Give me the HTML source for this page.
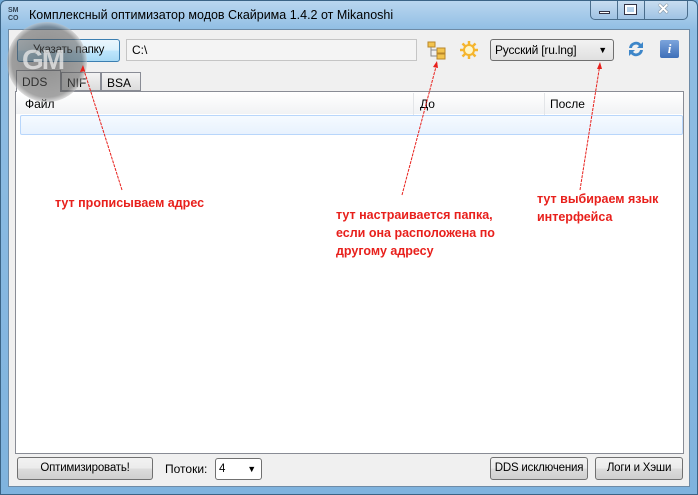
<!DOCTYPE html>
<html><head><meta charset="utf-8"><style>
*{margin:0;padding:0;box-sizing:border-box}
body{width:698px;height:495px;position:relative;overflow:hidden;font-family:"Liberation Sans",sans-serif;font-size:12px;background:#6fa8d6}
.win{position:absolute;left:0;top:0;width:698px;height:495px;background:linear-gradient(#b9d6ef,#8fbde3 30px,#7fb3de);border:1px solid #3b6486;border-radius:6px 6px 0 0}
.title{position:absolute;left:28px;top:7px;font-size:12.5px;color:#000}
.client{position:absolute;left:8px;top:29px;width:682px;height:458px;background:#f0f0f0;border:1px solid #6e8ba6}
.a{position:absolute}
.btn{position:absolute;border:1px solid #707070;border-radius:3px;background:linear-gradient(#f2f2f2,#ebebeb 50%,#dcdcdc 51%,#cfcfcf);text-align:center;font-size:11.5px;white-space:nowrap;letter-spacing:-0.2px}
.red{position:absolute;color:#e8201c;font-weight:bold;font-size:12.5px;line-height:18px}
</style></head><body>
<div class="win">
<div class="a" style="left:7px;top:6px;font-size:7px;font-weight:bold;color:#345;line-height:8px">SM<br>CO</div>
<div class="title">Комплексный оптимизатор модов Скайрима 1.4.2 от Mikanoshi</div>
<div class="a" style="left:589px;top:0;width:98px;height:19px;border:1px solid #4a6d8c;border-top:none;border-radius:0 0 5px 5px;background:linear-gradient(#c8ddf0,#9fc3e4);overflow:hidden">
<div class="a" style="left:26px;top:0;width:1px;height:19px;background:#4a6d8c"></div>
<div class="a" style="left:53px;top:0;width:1px;height:19px;background:#4a6d8c"></div>
<div class="a" style="left:8px;top:10px;width:11px;height:3px;background:#fff;border:1px solid #334"></div>
<div class="a" style="left:34px;top:4px;width:11px;height:9px;border:2px solid #fff;outline:1px solid #334"></div>
<div class="a" style="left:66px;top:-1px;color:#fff;font-weight:bold;font-size:15px;text-shadow:0 0 1px #000">✕</div>
</div>
</div>
<div class="client">
<div class="btn" style="left:8px;top:9px;width:103px;height:23px;line-height:21px;border-color:#3c7fb1;background:linear-gradient(#eaf6fd,#d9f0fc 50%,#bee6fd 51%,#a7d9f5)">Указать папку</div>
<div class="a" style="left:117px;top:9px;width:291px;height:22px;border:1px solid #c5c5c5;background:#f4f4f4;padding:3px 5px;font-size:12px">C:\</div>
<svg class="a" style="left:418px;top:10px" width="20" height="20"><rect x="1" y="2" width="7" height="5" fill="#f3c44e" stroke="#b8862a"/><rect x="10" y="8" width="8" height="5" fill="#f3c44e" stroke="#b8862a"/><rect x="10" y="14" width="8" height="5" fill="#f3c44e" stroke="#b8862a"/><path d="M4 7v9h6M4 10h6" stroke="#888" fill="none"/></svg>
<svg class="a" style="left:450px;top:10px" width="20" height="20"><g stroke="#f5b52e" stroke-width="2.5"><path d="M10 1v18M1 10h18M3.5 3.5l13 13M16.5 3.5l-13 13"/></g><circle cx="10" cy="10" r="5" fill="#fff6c8" stroke="#f5b52e" stroke-width="2"/></svg>
<div class="btn" style="left:481px;top:9px;width:124px;height:22px;line-height:20px;text-align:left;padding-left:4px;background:linear-gradient(#f2f2f2,#e0e0e0);font-size:12px">Русский [ru.lng]<span style="position:absolute;right:6px;top:0;font-size:9px">▼</span></div>
<svg class="a" style="left:617px;top:9px" width="20" height="20"><path d="M3 9a7 7 0 0 1 12-4l2-2v6h-6l2-2a4 4 0 0 0-7 2z" fill="#3d86c9"/><path d="M17 11a7 7 0 0 1-12 4l-2 2v-6h6l-2 2a4 4 0 0 0 7-2z" fill="#3d86c9"/></svg>
<div class="a" style="left:651px;top:10px;width:19px;height:18px;background:linear-gradient(#7ca4dc,#3e6fb8);border-radius:2px;color:#fff;font:bold italic 13px 'Liberation Serif',serif;text-align:center;line-height:18px">i</div>
<div class="a" style="left:6px;top:61px;width:669px;height:363px;background:#fff;border:1px solid #898c95"></div>
<div class="a" style="left:7px;top:40px;width:45px;height:22px;background:#fff;border:1px solid #898c95;border-bottom:none;padding:4px 5px">DDS</div>
<div class="a" style="left:52px;top:42px;width:40px;height:19px;background:linear-gradient(#f3f3f3,#dcdcdc);border:1px solid #898c95;padding:3px 5px">NIF</div>
<div class="a" style="left:92px;top:42px;width:40px;height:19px;background:linear-gradient(#f3f3f3,#dcdcdc);border:1px solid #898c95;padding:3px 5px">BSA</div>
<div class="a" style="left:7px;top:63px;width:667px;height:21px;background:linear-gradient(#fff,#f1f2f4)"></div>
<div class="a" style="left:16px;top:67px">Файл</div>
<div class="a" style="left:404px;top:63px;width:1px;height:42px;background:#e3e5e8"></div>
<div class="a" style="left:535px;top:63px;width:1px;height:42px;background:#e3e5e8"></div>
<div class="a" style="left:411px;top:67px">До</div>
<div class="a" style="left:541px;top:67px">После</div>
<div class="a" style="left:11px;top:85px;width:663px;height:20px;border:1px solid #b8d6fb;border-radius:2px;background:linear-gradient(#f5faff,#e8f2fe)"></div>
<div class="btn" style="left:8px;top:427px;width:136px;height:23px;line-height:21px">Оптимизировать!</div>
<div class="a" style="left:156px;top:432px">Потоки:</div>
<div class="btn" style="left:206px;top:428px;width:47px;height:22px;line-height:20px;text-align:left;padding-left:3px;background:#fff">4<span style="position:absolute;right:5px;top:0;font-size:9px">▼</span></div>
<div class="btn" style="left:481px;top:427px;width:98px;height:23px;line-height:21px">DDS исключения</div>
<div class="btn" style="left:586px;top:427px;width:88px;height:23px;line-height:21px">Логи и Хэши</div>
</div>
<div class="a" style="left:7px;top:22px;width:80px;height:80px;border-radius:50%;background:radial-gradient(circle,rgba(70,70,70,.6),rgba(90,90,90,.55) 62%,rgba(210,210,210,.55) 72%,rgba(140,140,140,.3) 80%,rgba(140,140,140,0) 82%);"></div>
<div class="a" style="left:22px;top:44px;color:rgba(235,235,235,.75);font-weight:bold;font-size:28px;letter-spacing:-2px">GM</div>
<svg class="a" style="left:0;top:0" width="698" height="495"><g stroke="#e8201c" stroke-width="1" stroke-dasharray="3,1" fill="none"><path d="M122 190L83 67"/><path d="M402 195L437 63"/><path d="M580 190L600 64"/></g><g fill="#e8201c"><path d="M83 65l-3 7 5-1z"/><path d="M437 61l-4 6 5 1z"/><path d="M600 62l-3 7 5 0z"/></g></svg>
<div class="red" style="left:55px;top:194px">тут прописываем адрес</div>
<div class="red" style="left:336px;top:206px">тут настраивается папка,<br>если она расположена по<br>другому адресу</div>
<div class="red" style="left:537px;top:190px">тут выбираем язык<br>интерфейса</div>
</body></html>
